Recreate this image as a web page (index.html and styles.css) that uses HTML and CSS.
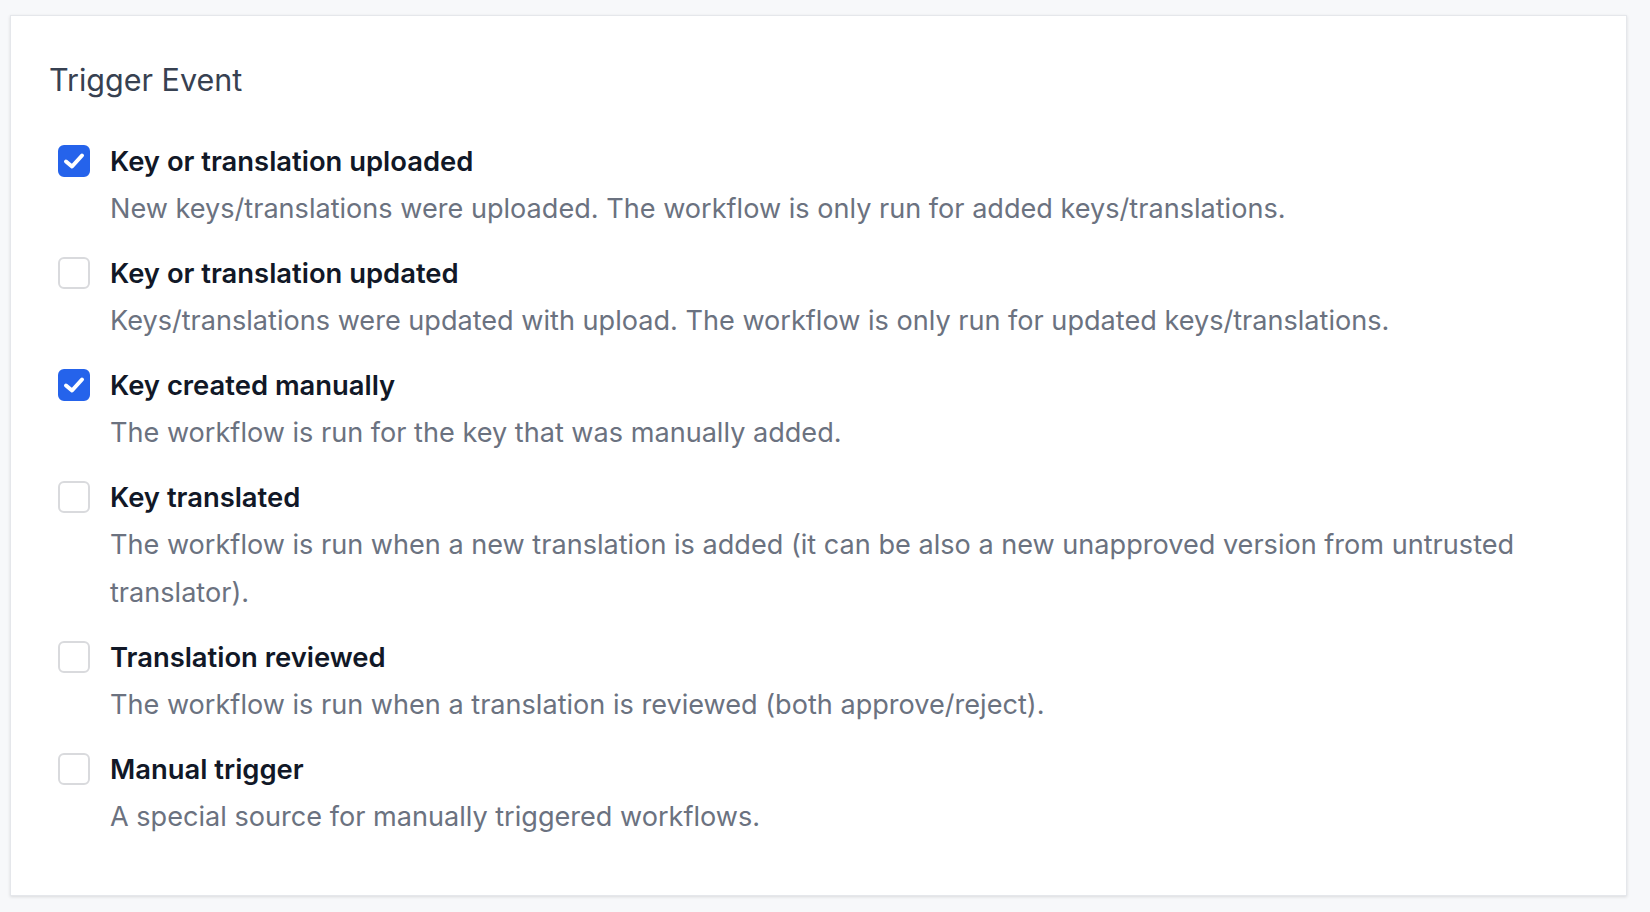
FILE: index.html
```html
<!DOCTYPE html>
<html>
<head>
<meta charset="utf-8">
<link rel="stylesheet" href="styles.css">
</head>
<body>
<div class="card">
  <h2 class="title">Trigger Event</h2>
  <ul class="options">
    <li class="option">
      <span class="box checked"><svg viewBox="0 0 32 32" width="32" height="32"><path d="M8 16.5 L14 21.5 L24 10.5" fill="none" stroke="#fff" stroke-width="4" stroke-linecap="round" stroke-linejoin="round"/></svg></span>
      <div class="text">
        <div class="label">Key or translation uploaded</div>
        <div class="desc">New keys/translations were uploaded. The workflow is only run for added keys/translations.</div>
      </div>
    </li>
    <li class="option">
      <span class="box"></span>
      <div class="text">
        <div class="label">Key or translation updated</div>
        <div class="desc">Keys/translations were updated with upload. The workflow is only run for updated keys/translations.</div>
      </div>
    </li>
    <li class="option">
      <span class="box checked"><svg viewBox="0 0 32 32" width="32" height="32"><path d="M8 16.5 L14 21.5 L24 10.5" fill="none" stroke="#fff" stroke-width="4" stroke-linecap="round" stroke-linejoin="round"/></svg></span>
      <div class="text">
        <div class="label">Key created manually</div>
        <div class="desc">The workflow is run for the key that was manually added.</div>
      </div>
    </li>
    <li class="option">
      <span class="box"></span>
      <div class="text">
        <div class="label">Key translated</div>
        <div class="desc">The workflow is run when a new translation is added (it can be also a new unapproved version from untrusted translator).</div>
      </div>
    </li>
    <li class="option">
      <span class="box"></span>
      <div class="text">
        <div class="label">Translation reviewed</div>
        <div class="desc">The workflow is run when a translation is reviewed (both approve/reject).</div>
      </div>
    </li>
    <li class="option">
      <span class="box"></span>
      <div class="text">
        <div class="label">Manual trigger</div>
        <div class="desc">A special source for manually triggered workflows.</div>
      </div>
    </li>
  </ul>
</div>
</body>
</html>
```
FILE: styles.css
```css
html, body {
  margin: 0;
  padding: 0;
}
body {
  background: #f7f8fa;
  font-family: Inter, "Noto Sans", sans-serif;
  padding: 15px 23px 16px 10px;
}
.card {
  background: #ffffff;
  border: 1px solid #e5e7eb;
  box-shadow: 0 1px 3px rgba(0, 0, 0, 0.12);
  height: 881px;
  box-sizing: border-box;
  padding: 44px 40px 0 38px;
}
.title {
  margin: 0;
  font-size: 30.5px;
  font-weight: 400;
  color: #374151;
  line-height: 40px;
}
.options {
  list-style: none;
  margin: 37px 0 0 0;
  padding: 0 0 0 9px;
  display: flex;
  flex-direction: column;
  gap: 16px;
}
.option {
  display: flex;
  align-items: flex-start;
  gap: 20px;
}
.box {
  flex: none;
  width: 32px;
  height: 32px;
  margin-top: 8px;
  box-sizing: border-box;
  border: 2px solid #d9dadd;
  border-radius: 6px;
  background: #fff;
  display: flex;
}
.box.checked {
  background: #2563eb;
  border-color: #2563eb;
}
.box.checked svg {
  margin: -2px;
}
.text {
  display: flex;
  flex-direction: column;
  padding-right: 60px;
}
.label {
  font-size: 27.4px;
  font-weight: 600;
  color: #111827;
  line-height: 48px;
}
.desc {
  font-size: 27.1px;
  color: #6b7280;
  line-height: 48px;
}
```
